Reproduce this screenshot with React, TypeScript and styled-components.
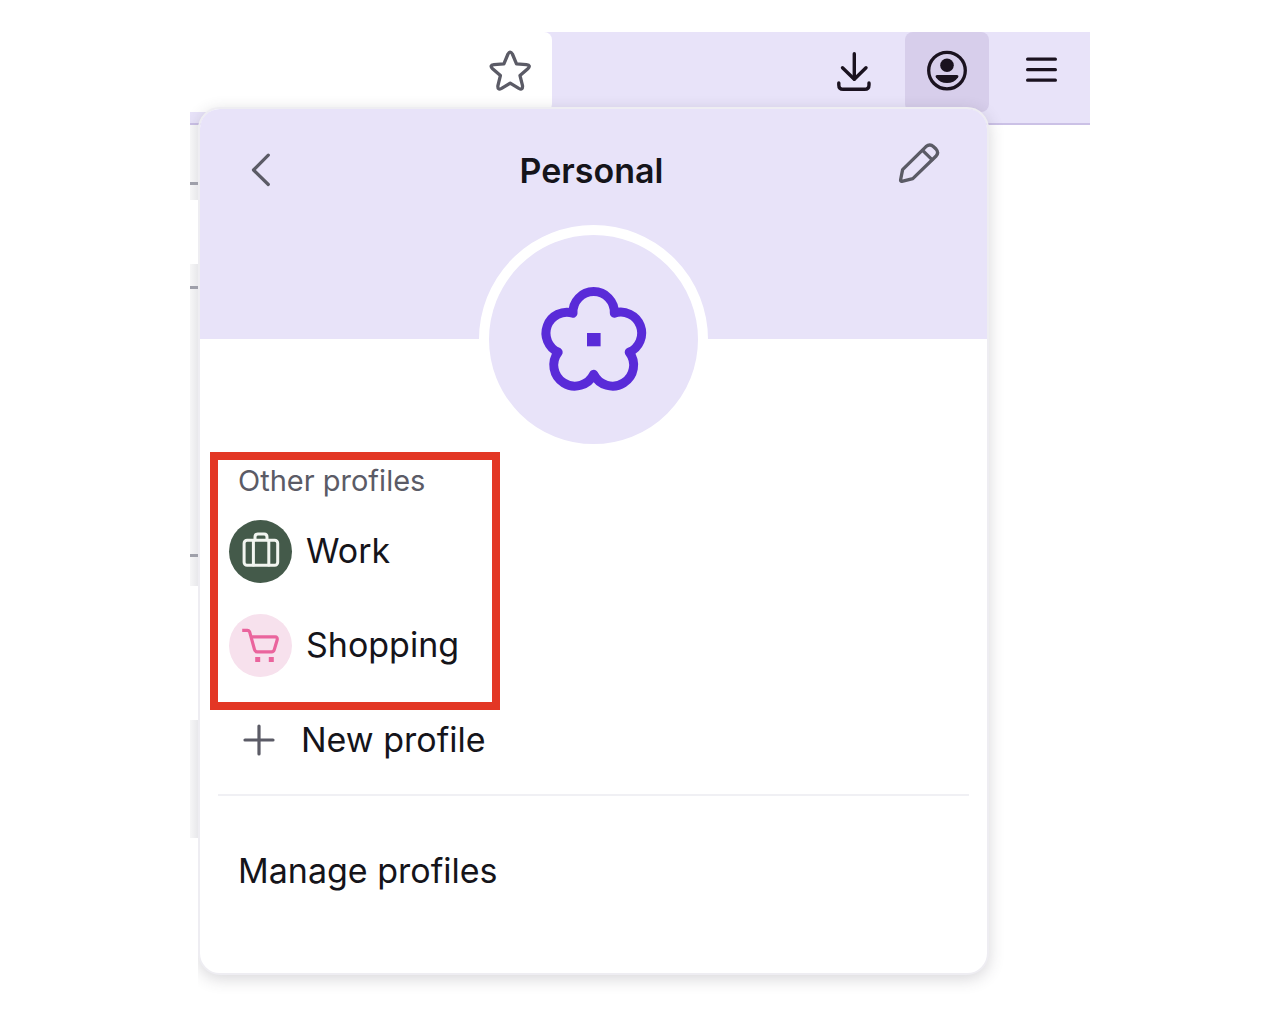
import React from "react";
import styled, { createGlobalStyle } from "styled-components";

const GlobalStyle = createGlobalStyle`
  *, *::before, *::after { box-sizing: border-box; }
  body {
    margin: 0;
    background: #ffffff;
    color: #15141a;
    font-family: Inter, "Liberation Sans", sans-serif;
  }
  button { font: inherit; color: inherit; cursor: pointer; }
`;

const Window = styled.div`
  position: relative;
  max-width: 900px;
  margin: 32px auto 0;
  padding-bottom: 20px;
  overflow: hidden;
`;

const Toolbar = styled.header`
  display: flex;
  align-items: flex-start;
  gap: 10px;
  padding: 0 7px 11px 0;
  background: #e8e3f9;
  border-bottom: 2px solid #cbc1e6;
`;

const AddressBar = styled.div`
  display: flex;
  justify-content: flex-end;
  width: 362px;
  margin-right: auto;
  background: #ffffff;
  border-radius: 0 8px 8px 0;
`;

const ToolButton = styled.button<{ $active?: boolean; $tone?: string }>`
  display: grid;
  place-items: center;
  width: 84px;
  height: 80px;
  padding: 0 0 2px;
  border: 0;
  border-radius: 8px;
  background: ${(p) => (p.$active ? "#d7ceeb" : "transparent")};
  color: ${(p) => p.$tone ?? "#1a121f"};
`;

const PageEdge = styled.div`
  display: flex;
  flex-direction: column;
  position: relative;
  z-index: 2;
  width: 8px;
`;

const EdgePart = styled.div<{ $size: number; $kind: "shade" | "clear" | "rule" }>`
  height: ${(p) => p.$size}px;
  background: ${(p) =>
    p.$kind === "rule"
      ? "#9fa0aa"
      : p.$kind === "clear"
        ? "#ffffff"
        : "linear-gradient(to right, #f6f6f7, #e8e8eb)"};
`;

const Panel = styled.main`
  position: absolute;
  z-index: 1;
  top: 75px;
  left: 8px;
  right: 101px;
  padding-bottom: 72px;
  border: 2px solid #eeedf2;
  border-radius: 22px;
  background: #ffffff;
  background-clip: padding-box;
  box-shadow: 0 4px 16px rgba(58, 57, 68, 0.2);
`;

const PanelHeader = styled.div`
  display: flex;
  justify-content: space-between;
  align-items: flex-start;
  height: 230px;
  padding: 32px 46px 0 40px;
  background: #e8e3f9;
  border-radius: 20px 20px 0 0;
`;

const HeaderButton = styled.button`
  display: grid;
  padding: 0;
  border: 0;
  background: none;
  color: #5b5b66;
`;

const BackButton = styled(HeaderButton)`
  padding: 7px 2px 0 0;
`;

const Title = styled.h1`
  margin: 8px 0 0;
  font-size: 34px;
  font-weight: 600;
  line-height: 44px;
`;

const ProfileAvatar = styled.div`
  display: grid;
  place-items: center;
  width: 229px;
  height: 229px;
  margin: -114px auto 0;
  border: 10px solid #ffffff;
  border-radius: 50%;
  background: #e8e3f9;
  color: #592bd8;
`;

const HighlightedGroup = styled.section`
  width: 290px;
  margin: -2px 0 0 10px;
  padding-bottom: 10px;
  border: 8px solid #e33725;
`;

const GroupTitle = styled.h2`
  margin: 0;
  padding: 0 0 2px 20px;
  color: #5b5b66;
  font-size: 29px;
  font-weight: 400;
  line-height: 42px;
`;

const List = styled.ul`
  margin: 0;
  padding: 0;
  list-style: none;
`;

const ProfileRow = styled.button`
  display: flex;
  align-items: center;
  gap: 14px;
  width: 100%;
  height: 94px;
  padding: 0 0 0 11px;
  border: 0;
  background: none;
  font-size: 34px;
  line-height: 44px;
  text-align: left;
`;

const Badge = styled.span<{ $bg: string; $fg: string }>`
  display: grid;
  place-items: center;
  width: 63px;
  height: 63px;
  border-radius: 50%;
  background: ${(p) => p.$bg};
  color: ${(p) => p.$fg};
`;

const ActionRow = styled.button`
  display: flex;
  align-items: center;
  gap: 26px;
  width: 100%;
  height: 60px;
  padding: 0 0 0 43px;
  border: 0;
  background: none;
  font-size: 34px;
  line-height: 44px;
  text-align: left;

  svg { color: #5b5b66; }
`;

const ManageRow = styled(ActionRow)`
  padding-left: 38px;
`;

const Divider = styled.hr`
  height: 2px;
  margin: 24px 18px 45px;
  border: 0;
  background: #f0f0f4;
`;

type IconProps = { w: number; h?: number; sw?: number; children: React.ReactNode };

const Icon = ({ w, h = w, sw = 3, children }: IconProps) => (
  <svg
    width={w}
    height={h}
    viewBox={`0 0 ${w} ${h}`}
    fill="none"
    stroke="currentColor"
    strokeWidth={sw}
    strokeLinecap="round"
    strokeLinejoin="round"
    aria-hidden="true"
  >
    {children}
  </svg>
);

const StarIcon = () => (
  <Icon w={44} sw={3.3}>
    <path d="M20 5 Q22.2 1.2 24.4 5 L28.5 14.9 L38.4 15.6 Q43.4 16.3 39.8 19.8 L32 26.6 L34.5 36.6 Q35 41.6 30.8 39.4 L22.2 34.2 L13.6 39.4 Q9.4 41.6 9.9 36.6 L12.4 26.6 L4.6 19.8 Q1 16.3 6 15.6 L15.9 14.9 Z" />
  </Icon>
);

const DownloadIcon = () => (
  <Icon w={40} h={44} sw={3.4}>
    <path d="M21.3 4.8V30" />
    <path d="M9.5 18.7 21.3 30.3 33 18.7" />
    <path d="M5.8 34V36Q5.8 40.3 10.2 40.3H31.6Q36 40.3 36 36V34" />
  </Icon>
);

const AccountIcon = () => (
  <Icon w={44} sw={3.3}>
    <circle cx="22" cy="21.6" r="18.3" />
    <circle cx="22" cy="16.3" r="6.8" fill="currentColor" stroke="none" />
    <path d="M12.3 26H31.7Q34.3 26.3 33 28.5Q29 34 22 34Q15 34 11 28.5Q9.7 26.3 12.3 26Z" fill="currentColor" stroke="none" />
  </Icon>
);

const MenuIcon = () => (
  <Icon w={36} sw={3.2}>
    <path d="M4.6 6.2H32.4M4.6 16.7H32.4M4.6 27.2H32.4" />
  </Icon>
);

const BackIcon = () => (
  <Icon w={44} sw={3.2}>
    <path d="M28.3 7.2 13.5 22 28.3 36.5" />
  </Icon>
);

const PencilIcon = () => (
  <Icon w={44} sw={3.3}>
    <path d="M5.6 28.6 29 5.6Q32.9 2.2 36.6 5.7L39 8Q42.3 11.7 38.9 15.3L15.8 37.6 4.9 40.3Q3.4 40.5 3.6 38.8Z" />
    <path d="M25.6 9.4 35 18.6" />
  </Icon>
);

const FlowerIcon = () => (
  <Icon w={120} sw={9}>
    <path d="M39 33.2A20.67 20.67 0 1 1 80.3 33.2A20.9 20.9 0 0 1 95.2 72.2A21 21 0 1 1 59.7 94.2A21 21 0 1 1 24.2 72.2A20.9 20.9 0 0 1 39 33.2Z" />
    <rect x="53" y="53" width="13.6" height="13.3" fill="currentColor" stroke="none" />
  </Icon>
);

const BriefcaseIcon = () => (
  <Icon w={44}>
    <rect x="5.1" y="11.2" width="33.6" height="25" rx="3" />
    <path d="M16 10.7V7.9Q16 4.9 18.8 4.9H25.2Q28 4.9 28 7.9V10.7M14.4 11.5V36M29.8 11.5V36" />
  </Icon>
);

const CartIcon = () => (
  <Icon w={44} sw={3.2}>
    <path d="M3.2 7.3H8.3Q10.1 7.3 10.7 9.1L15.5 26.7Q16.1 28.9 18.3 28.9H32.5Q34.7 28.9 35.3 26.7L38.2 16.7Q38.6 13.9 36.2 13.9H12.3" strokeLinecap="butt" />
    <path d="M16.2 34h5v5h-5zM29.8 34h5v5h-5z" fill="currentColor" stroke="none" />
  </Icon>
);

const PlusIcon = () => (
  <Icon w={32} sw={3.2}>
    <path d="M16 2V30M2 16H30" />
  </Icon>
);

const profiles = [
  { name: "Work", bg: "#445a4a", fg: "#f2f5f0", icon: <BriefcaseIcon /> },
  { name: "Shopping", bg: "#f7e1ed", fg: "#ea649d", icon: <CartIcon /> },
];

const pageEdge: { size: number; kind: "shade" | "clear" | "rule" }[] = [
  { size: 57, kind: "shade" },
  { size: 3, kind: "rule" },
  { size: 15, kind: "shade" },
  { size: 64, kind: "clear" },
  { size: 22, kind: "shade" },
  { size: 3, kind: "rule" },
  { size: 265, kind: "shade" },
  { size: 3, kind: "rule" },
  { size: 29, kind: "shade" },
  { size: 134, kind: "clear" },
  { size: 118, kind: "shade" },
  { size: 154, kind: "clear" },
];

export default function App() {
  return (
    <>
      <GlobalStyle />
      <Window>
        <Toolbar>
          <AddressBar>
            <ToolButton $tone="#5b5b66" aria-label="Bookmark this page">
              <StarIcon />
            </ToolButton>
          </AddressBar>
          <ToolButton aria-label="Downloads">
            <DownloadIcon />
          </ToolButton>
          <ToolButton $active aria-label="Account">
            <AccountIcon />
          </ToolButton>
          <ToolButton aria-label="Open application menu">
            <MenuIcon />
          </ToolButton>
        </Toolbar>
        <PageEdge>
          {pageEdge.map((part, i) => (
            <EdgePart key={i} $size={part.size} $kind={part.kind} />
          ))}
        </PageEdge>
        <Panel>
          <PanelHeader>
            <BackButton aria-label="Back">
              <BackIcon />
            </BackButton>
            <Title>Personal</Title>
            <HeaderButton aria-label="Edit profile">
              <PencilIcon />
            </HeaderButton>
          </PanelHeader>
          <ProfileAvatar>
            <FlowerIcon />
          </ProfileAvatar>
          <HighlightedGroup>
            <GroupTitle>Other profiles</GroupTitle>
            <List>
              {profiles.map((p) => (
                <li key={p.name}>
                  <ProfileRow>
                    <Badge $bg={p.bg} $fg={p.fg}>
                      {p.icon}
                    </Badge>
                    {p.name}
                  </ProfileRow>
                </li>
              ))}
            </List>
          </HighlightedGroup>
          <ActionRow>
            <PlusIcon />
            New profile
          </ActionRow>
          <Divider />
          <ManageRow>Manage profiles</ManageRow>
        </Panel>
      </Window>
    </>
  );
}
